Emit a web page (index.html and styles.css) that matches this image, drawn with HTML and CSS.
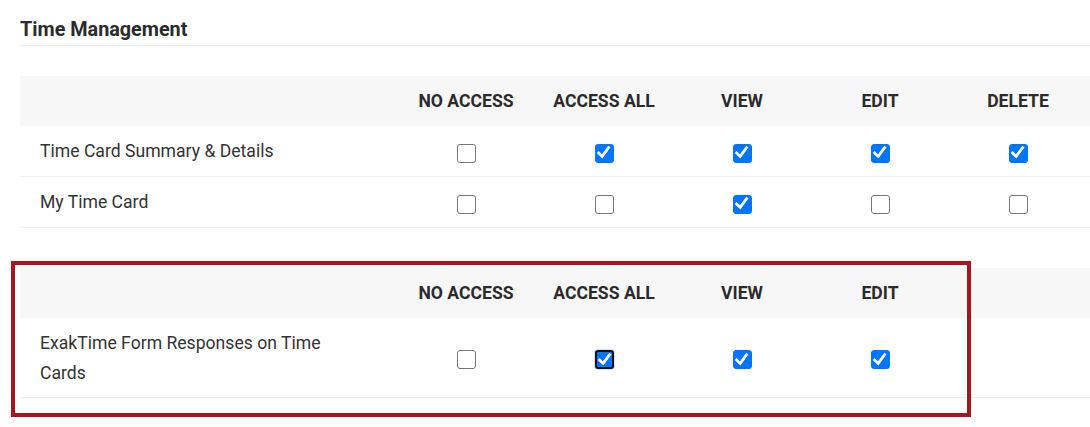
FILE: index.html
```html
<!DOCTYPE html>
<html lang="en">
<head>
<meta charset="utf-8">
<title>Time Management</title>
<link rel="stylesheet" href="styles.css">
</head>
<body>
<div class="page">
  <h2 class="section-title">Time Management</h2>

  <div class="perm-table first">
    <div class="row head">
      <div class="cell label"></div>
      <div class="cell"><span class="th">NO ACCESS</span></div>
      <div class="cell"><span class="th">ACCESS ALL</span></div>
      <div class="cell"><span class="th">VIEW</span></div>
      <div class="cell"><span class="th">EDIT</span></div>
      <div class="cell"><span class="th">DELETE</span></div>
    </div>
    <div class="row">
      <div class="cell label">Time Card Summary &amp; Details</div>
      <div class="cell"><span class="cb"></span></div>
      <div class="cell"><span class="cb on"><svg viewBox="0 0 19 19"><path d="M4.6 9.9 L8.2 13.4 L14.6 4.6"/></svg></span></div>
      <div class="cell"><span class="cb on"><svg viewBox="0 0 19 19"><path d="M4.6 9.9 L8.2 13.4 L14.6 4.6"/></svg></span></div>
      <div class="cell"><span class="cb on"><svg viewBox="0 0 19 19"><path d="M4.6 9.9 L8.2 13.4 L14.6 4.6"/></svg></span></div>
      <div class="cell"><span class="cb on"><svg viewBox="0 0 19 19"><path d="M4.6 9.9 L8.2 13.4 L14.6 4.6"/></svg></span></div>
    </div>
    <div class="row">
      <div class="cell label">My Time Card</div>
      <div class="cell"><span class="cb"></span></div>
      <div class="cell"><span class="cb"></span></div>
      <div class="cell"><span class="cb on"><svg viewBox="0 0 19 19"><path d="M4.6 9.9 L8.2 13.4 L14.6 4.6"/></svg></span></div>
      <div class="cell"><span class="cb"></span></div>
      <div class="cell"><span class="cb"></span></div>
    </div>
  </div>

  <div class="perm-table second">
    <div class="row head">
      <div class="cell label"></div>
      <div class="cell"><span class="th">NO ACCESS</span></div>
      <div class="cell"><span class="th">ACCESS ALL</span></div>
      <div class="cell"><span class="th">VIEW</span></div>
      <div class="cell"><span class="th">EDIT</span></div>
      <div class="cell"></div>
    </div>
    <div class="row tall">
      <div class="cell label"><span class="wrap">ExakTime Form Responses on Time Cards</span></div>
      <div class="cell"><span class="cb"></span></div>
      <div class="cell"><span class="cb on focus"><svg viewBox="0 0 19 19"><path d="M4.6 9.9 L8.2 13.4 L14.6 4.6"/></svg></span></div>
      <div class="cell"><span class="cb on"><svg viewBox="0 0 19 19"><path d="M4.6 9.9 L8.2 13.4 L14.6 4.6"/></svg></span></div>
      <div class="cell"><span class="cb on"><svg viewBox="0 0 19 19"><path d="M4.6 9.9 L8.2 13.4 L14.6 4.6"/></svg></span></div>
      <div class="cell"></div>
    </div>
    <div class="highlight"></div>
  </div>
</div>
</body>
</html>
```

FILE: styles.css
```css
html, body {
  margin: 0;
  padding: 0;
  background: #ffffff;
}

body {
  font-family: Roboto, "Liberation Sans", sans-serif;
  color: #333333;
  min-height: 427px;
  overflow-x: hidden;
}

.page {
  padding: 18px 0 30px 20px;
}

.section-title {
  margin: 0;
  font-size: 19.8px;
  line-height: 24px;
  font-weight: 700;
  color: #2b2b2b;
  padding-bottom: 3px;
  border-bottom: 1px solid #ececec;
}

.perm-table {
  position: relative;
}

.perm-table.first {
  margin-top: 30px;
}

.perm-table.second {
  margin-top: 40px;
}

.row {
  display: grid;
  grid-template-columns: 1fr repeat(5, 138px);
  padding-right: 3px;
  height: 50px;
  border-bottom: 1px solid #f0f0f0;
}

.row.head {
  background: #f7f7f7;
  border-bottom: none;
}

.row.tall {
  height: 79px;
}

.cell {
  display: flex;
  align-items: center;
  justify-content: center;
}

.cell.label {
  justify-content: flex-start;
  padding-left: 20px;
  font-size: 17.6px;
  color: #333333;
}

.wrap {
  display: block;
  max-width: 300px;
  line-height: 30px;
}

.th {
  font-size: 17.6px;
  font-weight: 700;
  color: #2b2b2b;
  white-space: nowrap;
}

.cb {
  box-sizing: border-box;
  display: inline-flex;
  width: 19px;
  height: 19px;
  margin-top: 4px;
  border: 1.5px solid #767676;
  border-radius: 3px;
  background: #ffffff;
}

.cb.on {
  background: #0075ff;
  border-color: #0075ff;
}

.cb svg {
  width: 19px;
  height: 19px;
  margin: -1.5px;
  flex: none;
}

.cb path {
  fill: none;
  stroke: #ffffff;
  stroke-width: 2.8;
  stroke-linecap: square;
  stroke-linejoin: miter;
}

.cb.focus {
  border: 2px solid #101010;
  box-shadow: 0 0 0 1px rgba(120, 170, 255, 0.35);
}

.cb.focus svg {
  margin: -2px;
}

.highlight {
  position: absolute;
  left: -9px;
  top: -7px;
  width: 960px;
  height: 156px;
  box-sizing: border-box;
  border: 4px solid #a3181f;
  pointer-events: none;
}
```
